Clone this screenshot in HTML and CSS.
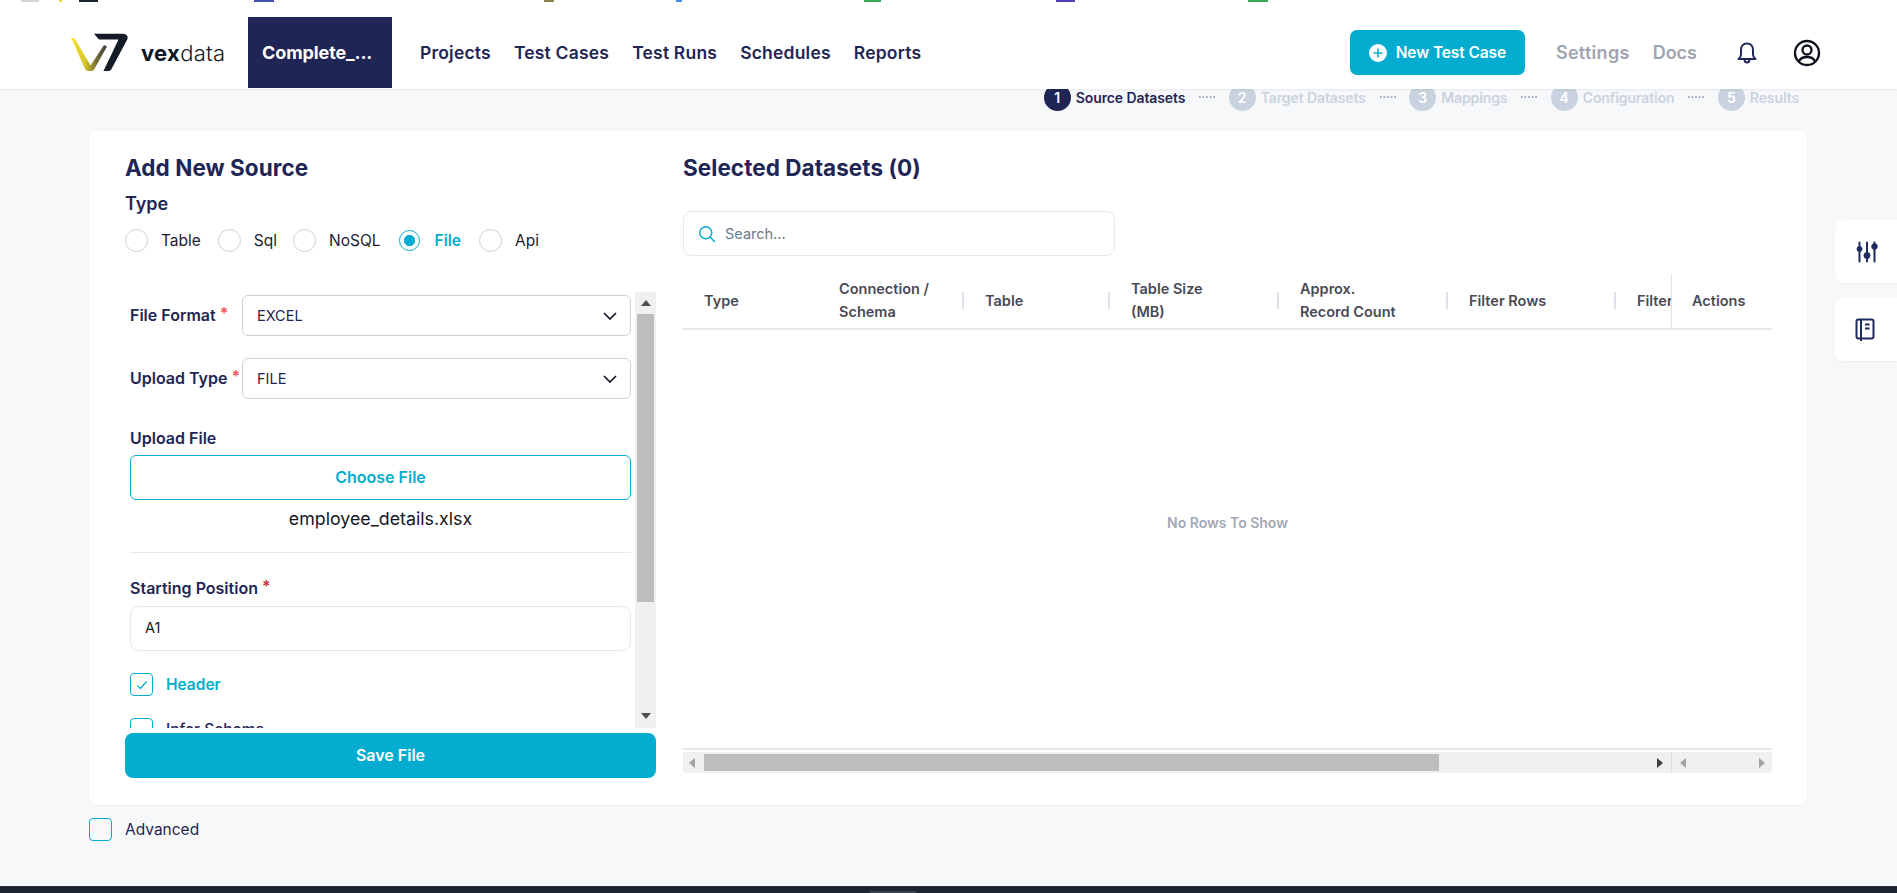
FILE: index.html
```html
<!DOCTYPE html>
<html lang="en">
<head>
<meta charset="utf-8">
<title>Vexdata - New Test Case</title>
<link rel="stylesheet" href="styles.css">
</head>
<body>
<div class="favbar">
  <i class="fav f1"></i><i class="fav f2"></i><i class="fav f3"></i><i class="fav f4"></i><i class="fav f5"></i><i class="fav f6"></i><i class="fav f7"></i><i class="fav f8"></i><i class="fav f9"></i>
</div>
<header class="topbar">
  <div class="brand">
    <svg class="brand-mark" viewBox="0 0 70 50" width="70" height="50">
      <defs>
        <linearGradient id="vg" x1="0" y1="0" x2="1" y2="0">
          <stop offset="0" stop-color="#f8e82c"/>
          <stop offset=".4" stop-color="#d6c52c"/>
          <stop offset=".72" stop-color="#6f6a34"/>
          <stop offset="1" stop-color="#3a3d3c"/>
        </linearGradient>
      </defs>
      <path fill="url(#vg)" d="M5 9.500 L9 11 L24.500 37.500 L38 17 L41 18.500 L28 41.500 Q27 43 25 43 L22 43 Q20 43 19 41 Z"/>
      <path fill="#141c28" d="M28 5.700 L57 5.700 Q62.500 6 61.500 11 L45.500 41 Q44.500 43 42.500 43 L37.500 43 L52.500 11.500 L33 11.500 Z"/>
    </svg>
    <span class="brand-name"><b>vex</b>data</span>
  </div>
  <a class="active-tab">Complete_...</a>
  <nav class="mainnav">
    <a>Projects</a><a>Test Cases</a><a>Test Runs</a><a>Schedules</a><a>Reports</a>
  </nav>
  <div class="top-actions">
    <button class="new-btn">
      <svg viewBox="0 0 18 18" width="18" height="18"><circle cx="9" cy="9" r="9" fill="#fff"/><path d="M9 4.500v9M4.500 9h9" stroke="#04adcf" stroke-width="1.600"/></svg>
      New Test Case
    </button>
    <a class="muted-link link-settings">Settings</a>
    <a class="muted-link link-docs">Docs</a>
    <svg class="bell" viewBox="0 0 24 24" width="24" height="24" fill="none" stroke="#1f2555" stroke-width="2" stroke-linejoin="round" stroke-linecap="round"><path d="M12 2.500c-4 0-6 3-6 6.500v4.500c0 2-1 3.300-2.500 4.500h17c-1.500-1.200-2.500-2.500-2.500-4.500V9c0-3.500-2-6.500-6-6.500z"/><path d="M9.500 18.500c0 2 1 3 2.500 3s2.500-1 2.500-3"/></svg>
    <svg class="user" viewBox="0 0 28 28" width="28" height="28" fill="none" stroke="#0b0f1c" stroke-width="2.300"><circle cx="14" cy="14" r="12"/><circle cx="14" cy="11" r="4.500"/><path d="M5.800 22.500c1.500-3.300 4.500-4.500 8.200-4.500s6.700 1.200 8.200 4.500"/></svg>
  </div>
</header>

<main class="page">
  <ol class="stepper">
    <li class="step current"><span class="dot">1</span><span class="step-name s1">Source Datasets</span></li>
    <li class="dash"></li>
    <li class="step"><span class="dot">2</span><span class="step-name s2">Target Datasets</span></li>
    <li class="dash"></li>
    <li class="step"><span class="dot">3</span><span class="step-name s3">Mappings</span></li>
    <li class="dash"></li>
    <li class="step"><span class="dot">4</span><span class="step-name s4">Configuration</span></li>
    <li class="dash"></li>
    <li class="step"><span class="dot">5</span><span class="step-name s5">Results</span></li>
  </ol>

  <section class="card">
    <div class="left-col">
      <h2 class="card-title">Add New Source</h2>
      <div class="type-label">Type</div>
      <div class="radios">
        <label class="radio r-table"><i class="circle"></i>Table</label>
        <label class="radio r-sql"><i class="circle"></i>Sql</label>
        <label class="radio r-nosql"><i class="circle"></i>NoSQL</label>
        <label class="radio r-file on"><i class="circle"></i>File</label>
        <label class="radio r-api"><i class="circle"></i>Api</label>
      </div>
      <div class="pane">
        <div class="form">
          <div class="form-row">
            <label class="form-label">File Format <em>*</em></label>
            <div class="select">EXCEL<svg viewBox="0 0 14 8" width="14" height="8" fill="none" stroke="#14182c" stroke-width="1.700"><path d="M1 1l6 6 6-6"/></svg></div>
          </div>
          <div class="form-row second">
            <label class="form-label">Upload Type <em>*</em></label>
            <div class="select">FILE<svg viewBox="0 0 14 8" width="14" height="8" fill="none" stroke="#14182c" stroke-width="1.700"><path d="M1 1l6 6 6-6"/></svg></div>
          </div>
          <label class="stack-label upload-label">Upload File</label>
          <button class="choose">Choose File</button>
          <div class="filename">employee_details.xlsx</div>
          <hr class="rule">
          <label class="stack-label start-label">Starting Position <em class="dark">*</em></label>
          <div class="textinput">A1</div>
          <label class="check on"><i class="box"><svg viewBox="0 0 14 14" width="14" height="14" fill="none" stroke="#04adcf" stroke-width="1.200"><path d="M2.500 7.500l3 3 6-7"/></svg></i>Header</label>
          <label class="check plain"><i class="box"></i>Infer Schema</label>
        </div>
        <div class="vscroll">
          <i class="arrow up"></i>
          <i class="vthumb"></i>
          <i class="arrow down"></i>
        </div>
      </div>
      <button class="save">Save File</button>
    </div>

    <div class="right-col">
      <h2 class="card-title">Selected Datasets (0)</h2>
      <div class="search">
        <svg viewBox="0 0 18 18" width="18" height="18" fill="none" stroke="#04adcf" stroke-width="1.500" stroke-linecap="round"><circle cx="7.800" cy="7.800" r="6"/><path d="M12.300 12.300l4.200 4.200"/></svg>
        <span>Search...</span>
      </div>
      <div class="grid">
        <div class="ghead">
          <div class="gcols">
            <div class="gcol">Type</div>
            <div class="gcol sep">Connection /<br>Schema</div>
            <div class="gcol sep">Table</div>
            <div class="gcol sep">Table Size<br>(MB)</div>
            <div class="gcol sep">Approx.<br>Record Count</div>
            <div class="gcol sep">Filter Rows</div>
            <div class="gcol">Filter Columns</div>
          </div>
          <div class="gpin">Actions</div>
        </div>
        <div class="gbody">No Rows To Show</div>
        <div class="hscroll">
          <div class="hmain">
            <i class="arrow left"></i>
            <i class="hthumb"></i>
            <i class="arrow right dark"></i>
          </div>
          <div class="hpin">
            <i class="arrow left"></i>
            <i class="arrow right"></i>
          </div>
        </div>
      </div>
    </div>
  </section>

  <label class="advanced"><i class="box"></i>Advanced</label>

  <aside class="side-tabs">
    <button class="side-tab">
      <svg viewBox="0 0 24 24" width="24" height="24" fill="#1f2a5f" stroke="#1f2a5f"><path d="M4.500 2.500v19M12 2.500v19M19.500 2.500v19" stroke-width="2" stroke-linecap="round"/><circle cx="4.500" cy="9" r="2.500"/><circle cx="12" cy="15.500" r="3"/><circle cx="19.500" cy="6.500" r="2.800"/></svg>
    </button>
    <button class="side-tab">
      <svg viewBox="0 0 20 24" width="20" height="24" fill="none" stroke="#1f2a5f" stroke-width="2"><rect x="1.500" y="1.500" width="17" height="19" rx="2"/><path d="M6 1.500V23M10 6.500h4.500M10 10.500h4.500" /></svg>
    </button>
  </aside>
</main>
<footer class="taskbar"><i class="task-item"></i></footer>
</body>
</html>
```
FILE: styles.css
```css
* { box-sizing: border-box; }
html, body { margin: 0; height: 100%; }
body {
  height: 893px;
  overflow: hidden;
  display: flex;
  flex-direction: column;
  background: #f7f8fa;
  font-family: Inter, "Liberation Sans", sans-serif;
  color: #1f2555;
}
i { display: block; font-style: normal; }
button { font-family: inherit; border: 0; padding: 0; }

.favbar { height: 2px; display: flex; background: #fff; position: relative; z-index: 3; }
.fav { height: 2px; }
.f1 { margin-left: 21px; width: 18px; background: #d5d5d5; }
.f2 { margin-left: 20px; width: 3px; background: #f2d43a; }
.f3 { margin-left: 17px; width: 19px; background: #1c2430; }
.f4 { margin-left: 156px; width: 20px; background: #4150b5; }
.f5 { margin-left: 270px; width: 10px; background: #8d8350; }
.f6 { margin-left: 122px; width: 6px; background: #3e8fea; }
.f7 { margin-left: 182px; width: 17px; background: #2fa84f; }
.f8 { margin-left: 175px; width: 19px; background: #4a3fb5; }
.f9 { margin-left: 173px; width: 20px; background: #2fa84f; }

.topbar {
  height: 87px;
  padding: 15px 0 1px;
  background: #fff;
  display: flex;
  align-items: center;
  position: relative;
  z-index: 2;
  box-shadow: 0 1px 2px rgba(30, 40, 70, .08);
}
.brand { width: 248px; display: flex; align-items: center; }
.brand-mark { margin: 0 0 0 66px; flex: none; }
.brand-name { margin-left: 5px; font-size: 22px; letter-spacing: .3px; color: #101826; font-weight: 300; }
.brand-name b { font-weight: 700; }
.active-tab {
  width: 144px;
  height: 71px;
  background: #1f2555;
  color: #fff;
  font-size: 18px;
  font-weight: 700;
  display: flex;
  align-items: center;
  padding-left: 14px;
  letter-spacing: -.1px;
}
.mainnav { margin-left: 28px; display: flex; gap: 23px; font-size: 17.500px; font-weight: 600; letter-spacing: .2px; }
.top-actions { margin-left: auto; display: flex; align-items: center; }
.new-btn {
  width: 175px;
  height: 45px;
  background: #04adcf;
  color: #fff;
  border-radius: 7px;
  font-size: 15.500px;
  font-weight: 600;
  display: flex;
  align-items: center;
  justify-content: center;
  gap: 9px;
  letter-spacing: -.1px;
}
.muted-link { color: #a0a4b1; font-size: 18px; font-weight: 600; letter-spacing: 0; }
.link-settings { margin-left: 31px; letter-spacing: .3px; }
.link-docs { margin-left: 23px; }
.bell { margin-left: 38px; }
.user { margin-left: 34px; margin-right: 76px; }

.page { flex: 1; padding: 0 90px 0 89px; position: relative; }
.stepper {
  list-style: none;
  margin: -6px 0 0;
  padding: 0 8px 0 0;
  height: 48px;
  display: flex;
  justify-content: flex-end;
  align-items: flex-start;
  font-size: 14px;
  font-weight: 600;
  letter-spacing: -.1px;
}
.step { display: flex; align-items: center; height: 28px; color: #c9d3e0; }
.dot {
  width: 27px;
  height: 27px;
  border-radius: 50%;
  background: #c9d3e0;
  color: #fff;
  display: flex;
  align-items: center;
  justify-content: center;
  margin-right: 5px;
  font-size: 14px;
}
.current { color: #1f2555; }
.current .dot { background: #1f2555; }
.dash { width: 18px; height: 28px; margin: 0 12.650px; background: radial-gradient(circle, #a9b2c2 .7px, transparent .9px) 0 center / 3.600px 3.600px repeat-x; }

.card {
  height: 674px;
  background: #fff;
  border-radius: 8px;
  box-shadow: 0 1px 2px rgba(30, 40, 70, .05);
  padding: 25px 35px 27px 36px;
  display: flex;
  gap: 27px;
}
.left-col { width: 531px; flex: none; display: flex; flex-direction: column; }
.right-col { flex: 1; min-width: 0; display: flex; flex-direction: column; }
.card-title { margin: 0; font-size: 22.500px; line-height: 24px; font-weight: 700; letter-spacing: .05px; }
.type-label { margin-top: 12px; font-size: 18px; line-height: 24px; font-weight: 600; }
.radios { margin-top: 13px; height: 23px; display: flex; font-size: 15.500px; color: #1c2033; }
.radio { display: flex; align-items: center; }
.circle { width: 23px; height: 23px; border-radius: 50%; border: 1px solid #ccd1dc; background: #fff; margin-right: 13px; }
.r-sql { margin-left: 17px; }
.r-nosql { margin-left: 16px; }
.r-file { margin-left: 18px; }
.r-api { margin-left: 18px; }
.radio.on { color: #04adcf; font-weight: 600; }
.radio.on .circle { width: 21px; height: 21px; border-color: #04adcf; position: relative; margin-right: 15px; background: radial-gradient(circle, #04adcf 0 5.300px, #fff 5.900px); }

.pane { margin-top: 40px; height: 436px; display: flex; }
.form { width: 501px; margin-left: 5px; padding-top: 3px; overflow: hidden; flex: none; }
.form-row { display: flex; align-items: center; }
.form-row.second { margin-top: 22px; }
.form-label { width: 112px; flex: none; font-size: 16px; line-height: 20px; padding-bottom: 1px; font-weight: 600; white-space: nowrap; }
em { font-style: normal; color: #f2555e; vertical-align: 2px; line-height: 0; }
em.dark { color: #d0303c; }
.select {
  width: 389px;
  height: 41px;
  border: 1px solid #ccd1dc;
  border-radius: 6px;
  padding: 0 13px 0 14px;
  display: flex;
  align-items: center;
  justify-content: space-between;
  font-size: 14.500px;
  color: #1f2555;
  background: #fff;
}
.stack-label { display: block; height: 20px; font-size: 16px; line-height: 20px; font-weight: 600; }
.upload-label { margin-top: 29px; }
.start-label { margin-top: 25px; }
.choose {
  display: block;
  width: 501px;
  height: 45px;
  margin-top: 7px;
  padding-bottom: 2px;
  border: 1px solid #04adcf;
  border-radius: 6px;
  background: #fff;
  color: #04adcf;
  font-size: 16px;
  font-weight: 600;
}
.filename { width: 501px; margin-top: 8px; text-align: center; font-size: 17.800px; line-height: 22px; color: #141722; }
.rule { width: 501px; margin: 22px 0 0; border: 0; border-top: 1px solid #e5e9f1; }
.textinput {
  width: 501px;
  height: 45px;
  margin-top: 8px;
  border: 1px solid #e5e9f1;
  border-radius: 8px;
  padding: 0 0 2px 14px;
  display: flex;
  align-items: center;
  font-size: 14.500px;
  color: #141722;
}
.check { display: flex; align-items: center; height: 23px; margin-top: 22px; font-size: 15.500px; font-weight: 600; line-height: 21px; }
.box { width: 23px; height: 23px; border: 1px solid #04adcf; border-radius: 4px; margin-right: 13px; display: flex; align-items: center; justify-content: center; flex: none; }
.check.on { color: #04adcf; }
.check.plain { color: #1f2555; font-weight: 500; }

.vscroll { width: 21px; margin-left: 4px; background: #f0f0f0; display: flex; flex-direction: column; align-items: center; }
.vthumb { width: 17px; height: 288px; background: #bdbdbd; margin-top: 8px; }
.arrow { width: 0; height: 0; flex: none; border-style: solid; border-color: transparent; }
.arrow.up { margin-top: 8px; border-width: 0 5px 6px; border-bottom-color: #505050; }
.arrow.down { margin-top: auto; margin-bottom: 9px; border-width: 6px 5px 0; border-top-color: #505050; }
.arrow.left { border-width: 5px 6px 5px 0; border-right-color: #a3a3a3; }
.arrow.right { border-width: 5px 0 5px 6px; border-left-color: #a3a3a3; }
.arrow.right.dark { border-left-color: #404040; }

.save {
  margin-top: 5px;
  height: 45px;
  flex: none;
  padding-bottom: 2px;
  background: #04adcf;
  color: #fff;
  font-size: 16px;
  font-weight: 600;
  border-radius: 8px;
}

.search {
  margin-top: 31px;
  width: 432px;
  height: 45px;
  border: 1px solid #e5e9f1;
  border-radius: 8px;
  padding-left: 14px;
  display: flex;
  align-items: center;
  gap: 9px;
  font-size: 14.500px;
  color: #6c7a8f;
}
.grid { margin-top: 18px; display: flex; flex-direction: column; }
.ghead { height: 56px; display: flex; border-bottom: 2px solid #e7e8ec; color: #4a4a55; font-size: 14.500px; font-weight: 600; line-height: 23px; }
.gcols { width: 988px; flex: none; overflow: hidden; display: grid; grid-template-columns: 135px 146px 146px 169px 169px 168px 170px; align-items: center; padding-bottom: 2px; }
.gcol { padding-left: 21px; position: relative; white-space: nowrap; }
.gcol.sep::after { content: ""; position: absolute; right: 0; top: 50%; width: 2px; height: 17px; margin-top: -8px; background: #dde1ea; }
.gpin { flex: 1; border-left: 1px solid #dfe1e6; padding: 0 0 2px 20px; display: flex; align-items: center; }
.gbody { height: 420px; display: flex; align-items: center; justify-content: center; border-bottom: 2px solid #e7e8ec; color: #a4a8b4; font-size: 14px; font-weight: 600; padding-bottom: 34px; }
.hscroll { margin-top: 2px; height: 21px; display: flex; background: #f0f0f0; border-radius: 0 0 3px 3px; }
.hmain { width: 989px; display: flex; align-items: center; padding-left: 6px; border-right: 1px solid #dfe1e6; }
.hthumb { width: 735px; height: 17px; background: #bdbdbd; margin-left: 9px; }
.hmain .arrow.right { margin-left: auto; margin-right: 8px; }
.hpin { flex: 1; display: flex; align-items: center; justify-content: space-between; padding: 0 7px 0 8px; }

.advanced { margin-top: 13px; display: flex; align-items: center; font-size: 15.500px; color: #1f2555; }
.side-tabs { position: absolute; right: 0; top: 131px; display: flex; flex-direction: column; gap: 15px; }
.side-tab { width: 62px; height: 63px; background: #fff; border-radius: 8px 0 0 8px; display: flex; align-items: center; padding-left: 20px; box-shadow: 0 1px 2px rgba(30, 40, 70, .05); }

.taskbar { height: 7px; flex: none; background: #1b2530; border-top: 1px solid #30343a; }
.task-item { width: 46px; height: 2px; margin: 4px 0 0 870px; background: #3b444e; }
```
